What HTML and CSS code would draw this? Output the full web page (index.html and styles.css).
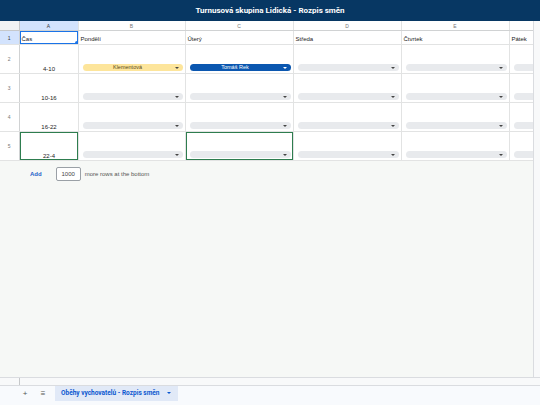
FILE: index.html
```html
<!DOCTYPE html>
<html lang="cs">
<head>
  <meta charset="UTF-8">
  <title>Turnusová skupina Lidická - Rozpis směn</title>
  <link rel="stylesheet" href="styles.css">
</head>
<body>

  <header class="title-bar">Turnusová skupina Lidická - Rozpis směn</header>

  <div class="workspace">
    <div class="grid-wrap">
      <table class="grid">
        <colgroup>
          <col class="c-head">
          <col class="c-a">
          <col class="c-b">
          <col class="c-day">
          <col class="c-day">
          <col class="c-day">
          <col class="c-day">
        </colgroup>
        <tr class="col-heads">
          <th class="corner"></th>
          <th class="active">A</th>
          <th>B</th>
          <th>C</th>
          <th>D</th>
          <th>E</th>
          <th></th>
        </tr>
        <tr class="row-first">
          <th class="row-num active">1</th>
          <td class="selected">Čas<span class="handle"></span></td>
          <td>Pondělí</td>
          <td>Úterý</td>
          <td>Středa</td>
          <td>Čtvrtek</td>
          <td>Pátek</td>
        </tr>
        <tr>
          <th class="row-num">2</th>
          <td class="time">4-10</td>
          <td><div class="chip chip-yellow">Klementová</div></td>
          <td><div class="chip chip-blue">Tomáš Rek</div></td>
          <td><div class="chip"></div></td>
          <td><div class="chip"></div></td>
          <td><div class="chip"></div></td>
        </tr>
        <tr>
          <th class="row-num">3</th>
          <td class="time">10-16</td>
          <td><div class="chip"></div></td>
          <td><div class="chip"></div></td>
          <td><div class="chip"></div></td>
          <td><div class="chip"></div></td>
          <td><div class="chip"></div></td>
        </tr>
        <tr>
          <th class="row-num">4</th>
          <td class="time">16-22</td>
          <td><div class="chip"></div></td>
          <td><div class="chip"></div></td>
          <td><div class="chip"></div></td>
          <td><div class="chip"></div></td>
          <td><div class="chip"></div></td>
        </tr>
        <tr>
          <th class="row-num">5</th>
          <td class="time marked">22-4</td>
          <td><div class="chip"></div></td>
          <td class="marked"><div class="chip"></div></td>
          <td><div class="chip"></div></td>
          <td><div class="chip"></div></td>
          <td><div class="chip"></div></td>
        </tr>
      </table>

      <div class="add-rows">
        <span class="add-link">Add</span>
        <span class="add-count">1000</span>
        <span class="add-note">more rows at the bottom</span>
      </div>
    </div>
    <div class="vscroll"></div>
  </div>

  <div class="hscroll"><div class="hscroll-frozen"></div></div>

  <footer class="tabs">
    <span class="tab-icon">+</span>
    <span class="tab-icon">≡</span>
    <span class="tab">Oběhy vychovatelů - Rozpis směn <span class="tab-arrow"></span></span>
  </footer>

</body>
</html>
```

FILE: styles.css
```css
body {
  margin: 0;
  height: 405px;
  display: flex;
  flex-direction: column;
  overflow: hidden;
  font-family: "Liberation Sans", Arial, sans-serif;
  background: #f6f8f6;
  color: #222;
}
.title-bar {
  height: 21px;
  flex-shrink: 0;
  display: flex;
  align-items: center;
  justify-content: center;
  background: #073763;
  color: #fff;
  font-family: Roboto, "Liberation Sans", sans-serif;
  font-weight: bold;
  font-size: 8px;
}
.workspace {
  flex: 1;
  display: flex;
  min-height: 0;
}
.grid-wrap {
  flex: 1;
  overflow: hidden;
}
.vscroll {
  width: 6px;
  border-left: 1px solid #dadce0;
  background: #f8f9fa;
}

/* sheet grid */
.grid {
  table-layout: fixed;
  border-collapse: collapse;
  width: 617px;
  background: #fff;
  font-size: 6px;
}
.c-head { width: 19px; }
.c-a { width: 59px; }
.c-b { width: 107px; }
.c-day { width: 108px; }
.grid th,
.grid td {
  border-right: 1px solid #e2e3e3;
  border-bottom: 1px solid #e2e3e3;
  padding: 0;
  overflow: hidden;
  white-space: nowrap;
}
.col-heads th {
  height: 9px;
  font-weight: normal;
  font-size: 5px;
  color: #777;
  background: #fff;
  border-bottom-color: #d0d2d3;
}
.grid .corner {
  background: #f1f3f4;
  border-right: 1px solid #c6c8ca;
  border-bottom: 1px solid #c6c8ca;
}
.grid th.active {
  background: #d3e3fd;
  color: #333;
}
.row-num {
  font-weight: normal;
  font-size: 5px;
  color: #777;
  background: #fff;
  border-right-color: #d0d2d3 !important;
}
.grid tr td,
.grid tr .row-num {
  height: 26px;
}
.grid .row-first td,
.grid .row-first .row-num {
  height: 11px;
}
.grid td {
  vertical-align: bottom;
  padding: 0 1px 2px 2px;
}
.grid td.time {
  text-align: center;
  padding-bottom: 1px;
}
.selected {
  position: relative;
  box-shadow: inset 0 0 0 1px #1a73e8;
}
.handle {
  position: absolute;
  right: -1px;
  bottom: -1px;
  width: 4px;
  height: 4px;
  border-radius: 50%;
  background: #1a73e8;
}
.marked {
  box-shadow: inset 0 0 0 1px #2e7d4f;
}

/* dropdown chips */
.chip {
  position: relative;
  height: 7px;
  margin: 0 1px 0 2px;
  padding-right: 10px;
  border-radius: 4px;
  background: #e8eaed;
  font-size: 5.5px;
  line-height: 7px;
  text-align: center;
  color: #333;
}
.chip::after {
  content: "";
  position: absolute;
  right: 4px;
  top: 2.5px;
  border-left: 2px solid transparent;
  border-right: 2px solid transparent;
  border-top: 2px solid #444;
}
.chip-yellow {
  background: #fde59b;
  color: #5a4a1a;
}
.chip-blue {
  background: #0b57b0;
  color: #fff;
}
.chip-blue::after {
  border-top-color: #fff;
}

/* add rows */
.add-rows {
  display: flex;
  align-items: center;
  height: 15px;
  margin-top: 5px;
  padding-left: 30px;
  font-size: 6px;
  color: #555;
}
.add-link {
  color: #1a5fc9;
  font-weight: bold;
  margin-right: 14px;
}
.add-count {
  box-sizing: border-box;
  width: 25px;
  height: 14px;
  line-height: 12px;
  border: 1px solid #9aa0a6;
  border-radius: 2px;
  text-align: center;
  color: #444;
  background: #fff;
  margin-right: 4px;
}

/* bottom */
.hscroll {
  height: 7px;
  flex-shrink: 0;
  border-top: 1px solid #dadce0;
  border-bottom: 1px solid #dadce0;
  background: #f8f9fa;
}
.hscroll-frozen {
  width: 19px;
  height: 100%;
  border-right: 1px solid #c6c8ca;
}
.tabs {
  height: 19px;
  flex-shrink: 0;
  display: flex;
  align-items: flex-start;
  background: #f8fafd;
}
.tab-icon {
  width: 18px;
  height: 15px;
  line-height: 15px;
  text-align: center;
  font-size: 8px;
  color: #555;
}
.tab-icon:first-child {
  margin-left: 16px;
}
.tab {
  margin-left: 3px;
  height: 15px;
  line-height: 15px;
  padding: 0 7px 0 6px;
  background: #e1e9f7;
  color: #0b57d0;
  font-family: Roboto, "Liberation Sans", sans-serif;
  font-weight: bold;
  font-size: 6.5px;
}
.tab-arrow {
  display: inline-block;
  margin-left: 6px;
  vertical-align: middle;
  border-left: 2px solid transparent;
  border-right: 2px solid transparent;
  border-top: 2px solid #0b57d0;
}
```
